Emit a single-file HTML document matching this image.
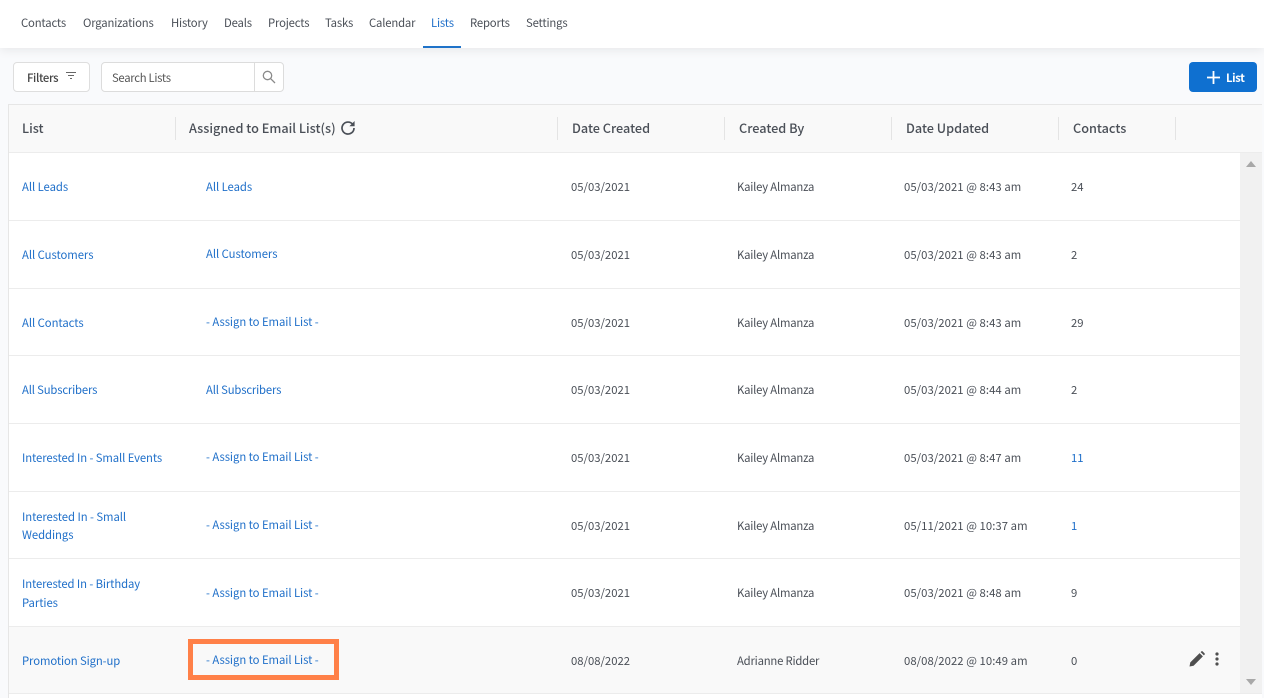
<!DOCTYPE html>
<html><head><meta charset="utf-8"><style>
html,body{margin:0;padding:0}
body{width:1264px;height:698px;overflow:hidden;position:relative;background:#f9fafc;font-family:"Noto Sans CJK JP","Liberation Sans",sans-serif;font-size:11.3px;color:#4a4f57}
.t{position:absolute;white-space:nowrap;line-height:18px;height:18px}
.l{color:#1f6fc9;letter-spacing:-.05px}
.m{letter-spacing:-.17px}
.n{letter-spacing:-.2px}
.u{letter-spacing:.06px}
.b{position:absolute;background:#ececec;height:1px;left:9px;width:1253px}
.s{position:absolute;background:#e4e4e4;width:1px;top:117px;height:23px}
.h{font-weight:500;font-size:12.7px;color:#4a4f57;top:119px}
.box{position:absolute;box-sizing:border-box}
</style></head><body>
<div class="box" style="left:0;top:0;width:1264px;height:48px;background:#fff;box-shadow:0 2px 10px rgba(0,0,0,.08)"></div>
<div class="t m" style="left:21px;top:14px">Contacts</div>
<div class="t m" style="left:83px;top:14px">Organizations</div>
<div class="t m" style="left:171px;top:14px">History</div>
<div class="t m" style="left:224px;top:14px">Deals</div>
<div class="t m" style="left:268px;top:14px">Projects</div>
<div class="t m" style="left:325px;top:14px">Tasks</div>
<div class="t m" style="left:369px;top:14px">Calendar</div>
<div class="t l m" style="left:431px;top:14px">Lists</div>
<div class="t m" style="left:470px;top:14px">Reports</div>
<div class="t m" style="left:526px;top:14px">Settings</div>
<div class="box" style="left:423px;top:46px;width:38px;height:2px;background:#1f73c9"></div>

<div class="box" style="left:13px;top:62px;width:77px;height:30px;background:#fff;border:1px solid #dedede;border-radius:4px"></div>
<div class="t" style="left:27px;top:69px;font-weight:500;color:#444;letter-spacing:-.35px">Filters</div>
<svg class="box" style="left:66px;top:72px" width="10" height="8"><path d="M0 .5H10M2 3.5H8M4 6.5H6" stroke="#666" stroke-width="1"/></svg>
<div class="box" style="left:101px;top:62px;width:183px;height:30px;background:#fff;border:1px solid #dcdcdc;border-radius:4px"></div>
<div class="box" style="left:254px;top:63px;width:1px;height:28px;background:#dcdcdc"></div>
<div class="t" style="left:112px;top:69px;color:#555;letter-spacing:-.3px">Search Lists</div>
<svg class="box" style="left:262px;top:70px" width="14" height="14" fill="none" stroke="#8a8a8a" stroke-width="1.3"><circle cx="5.5" cy="5.5" r="4.2"/><path d="M8.7 8.7L13 13"/></svg>

<div class="box" style="left:1189px;top:62px;width:68px;height:30px;background:#0f70d0;border-radius:4px"></div>
<svg class="box" style="left:1207px;top:71px" width="13" height="13"><path d="M6.5 0V13M0 6.5H13" stroke="#fff" stroke-width="1.8"/></svg>
<div class="t" style="left:1226px;top:69px;color:#fff;font-weight:700;letter-spacing:-.4px">List</div>

<div class="box" style="left:8px;top:104px;width:1254px;height:594px;background:#fff;border:1px solid #e6e6e6;border-bottom:0;border-right:0"></div>
<div class="box" style="left:9px;top:105px;width:1253px;height:47px;background:#f9f9f9"></div>
<div class="box" style="left:9px;top:627px;width:1231px;height:66px;background:#f9f9f9"></div>
<div class="box" style="left:1240px;top:153px;width:22px;height:540px;background:#f1f1f1"></div>
<svg class="box" style="left:1245px;top:160px" width="12" height="8"><path d="M1 7L6 1L11 7Z" fill="#a8a8a8"/></svg>
<svg class="box" style="left:1245px;top:678px" width="12" height="8"><path d="M1 1L6 7L11 1Z" fill="#a8a8a8"/></svg>

<div class="b" style="top:152px"></div><div class="b" style="top:220px;width:1231px"></div><div class="b" style="top:288px;width:1231px"></div><div class="b" style="top:355px;width:1231px"></div><div class="b" style="top:423px;width:1231px"></div><div class="b" style="top:491px;width:1231px"></div><div class="b" style="top:558px;width:1231px"></div><div class="b" style="top:626px;width:1231px"></div><div class="b" style="top:693px"></div>
<div class="s" style="left:175px"></div><div class="s" style="left:557px"></div><div class="s" style="left:724px"></div><div class="s" style="left:891px"></div><div class="s" style="left:1058px"></div><div class="s" style="left:1175px"></div>

<div class="t h" style="left:22px">List</div>
<div class="t h" style="left:189px">Assigned to Email List(s)</div>
<svg class="box" style="left:340px;top:120px" width="16" height="16" fill="none"><path d="M12.6 4.2A6 6 0 1 0 14 8" stroke="#4a4f57" stroke-width="1.7"/><path d="M14.6 1V6.2H9.4Z" fill="#4a4f57"/></svg>
<div class="t h" style="left:572px">Date Created</div>
<div class="t h" style="left:739px">Created By</div>
<div class="t h" style="left:906px">Date Updated</div>
<div class="t h" style="left:1073px">Contacts</div>

<div class="t l" style="left:22px;top:178px">All Leads</div><div class="t l" style="left:206px;top:178px">All Leads</div><div class="t" style="left:571px;top:178px">05/03/2021</div><div class="t n" style="left:737px;top:178px">Kailey Almanza</div><div class="t u" style="left:904px;top:178px">05/03/2021 @ 8:43 am</div><div class="t" style="left:1071px;top:178px">24</div>
<div class="t l" style="left:22px;top:246px">All Customers</div><div class="t l" style="left:206px;top:245px">All Customers</div><div class="t" style="left:571px;top:246px">05/03/2021</div><div class="t n" style="left:737px;top:246px">Kailey Almanza</div><div class="t u" style="left:904px;top:246px">05/03/2021 @ 8:43 am</div><div class="t" style="left:1071px;top:246px">2</div>
<div class="t l" style="left:22px;top:314px">All Contacts</div><div class="t l" style="left:206px;top:313px">- Assign to Email List -</div><div class="t" style="left:571px;top:314px">05/03/2021</div><div class="t n" style="left:737px;top:314px">Kailey Almanza</div><div class="t u" style="left:904px;top:314px">05/03/2021 @ 8:43 am</div><div class="t" style="left:1071px;top:314px">29</div>
<div class="t l m" style="left:22px;top:381px">All Subscribers</div><div class="t l m" style="left:206px;top:381px">All Subscribers</div><div class="t" style="left:571px;top:381px">05/03/2021</div><div class="t n" style="left:737px;top:381px">Kailey Almanza</div><div class="t u" style="left:904px;top:381px">05/03/2021 @ 8:44 am</div><div class="t" style="left:1071px;top:381px">2</div>
<div class="t l" style="left:22px;top:449px;letter-spacing:-.09px">Interested In - Small Events</div><div class="t l" style="left:206px;top:448px">- Assign to Email List -</div><div class="t" style="left:571px;top:449px">05/03/2021</div><div class="t n" style="left:737px;top:449px">Kailey Almanza</div><div class="t u" style="left:904px;top:449px">05/03/2021 @ 8:47 am</div><div class="t l" style="left:1071px;top:449px">11</div>
<div class="t l" style="left:22px;top:508px">Interested In - Small</div><div class="t l" style="left:22px;top:526px">Weddings</div><div class="t l" style="left:206px;top:516px">- Assign to Email List -</div><div class="t" style="left:571px;top:517px">05/03/2021</div><div class="t n" style="left:737px;top:517px">Kailey Almanza</div><div class="t u" style="left:904px;top:517px">05/11/2021 @ 10:37 am</div><div class="t l" style="left:1071px;top:517px">1</div>
<div class="t l" style="left:22px;top:575px;letter-spacing:-.1px">Interested In - Birthday</div><div class="t l" style="left:22px;top:594px">Parties</div><div class="t l" style="left:206px;top:584px">- Assign to Email List -</div><div class="t" style="left:571px;top:584px">05/03/2021</div><div class="t n" style="left:737px;top:584px">Kailey Almanza</div><div class="t u" style="left:904px;top:584px">05/03/2021 @ 8:48 am</div><div class="t" style="left:1071px;top:584px">9</div>
<div class="t l" style="left:22px;top:652px;letter-spacing:-.1px">Promotion Sign-up</div><div class="t l" style="left:206px;top:651px">- Assign to Email List -</div><div class="t" style="left:571px;top:652px">08/08/2022</div><div class="t n" style="left:737px;top:652px">Adrianne Ridder</div><div class="t u" style="left:904px;top:652px">08/08/2022 @ 10:49 am</div><div class="t" style="left:1071px;top:652px">0</div>

<div class="box" style="left:188px;top:639px;width:151px;height:41px;border:5px solid #ff8048"></div>
<svg class="box" style="left:1189px;top:651px" width="16" height="16"><path d="M0.5 15.5L1.3 11.4L10.6 2.1L13.9 5.4L4.6 14.7ZM11.6 1.1L12.5 .3Q13 0 13.5 .3L15.7 2.5Q16 3 15.7 3.5L14.9 4.4Z" fill="#4f4f4f"/></svg>
<svg class="box" style="left:1215px;top:652px" width="4" height="14"><circle cx="2" cy="2" r="1.6" fill="#4f4f4f"/><circle cx="2" cy="7" r="1.6" fill="#4f4f4f"/><circle cx="2" cy="12" r="1.6" fill="#4f4f4f"/></svg>
</body></html>
